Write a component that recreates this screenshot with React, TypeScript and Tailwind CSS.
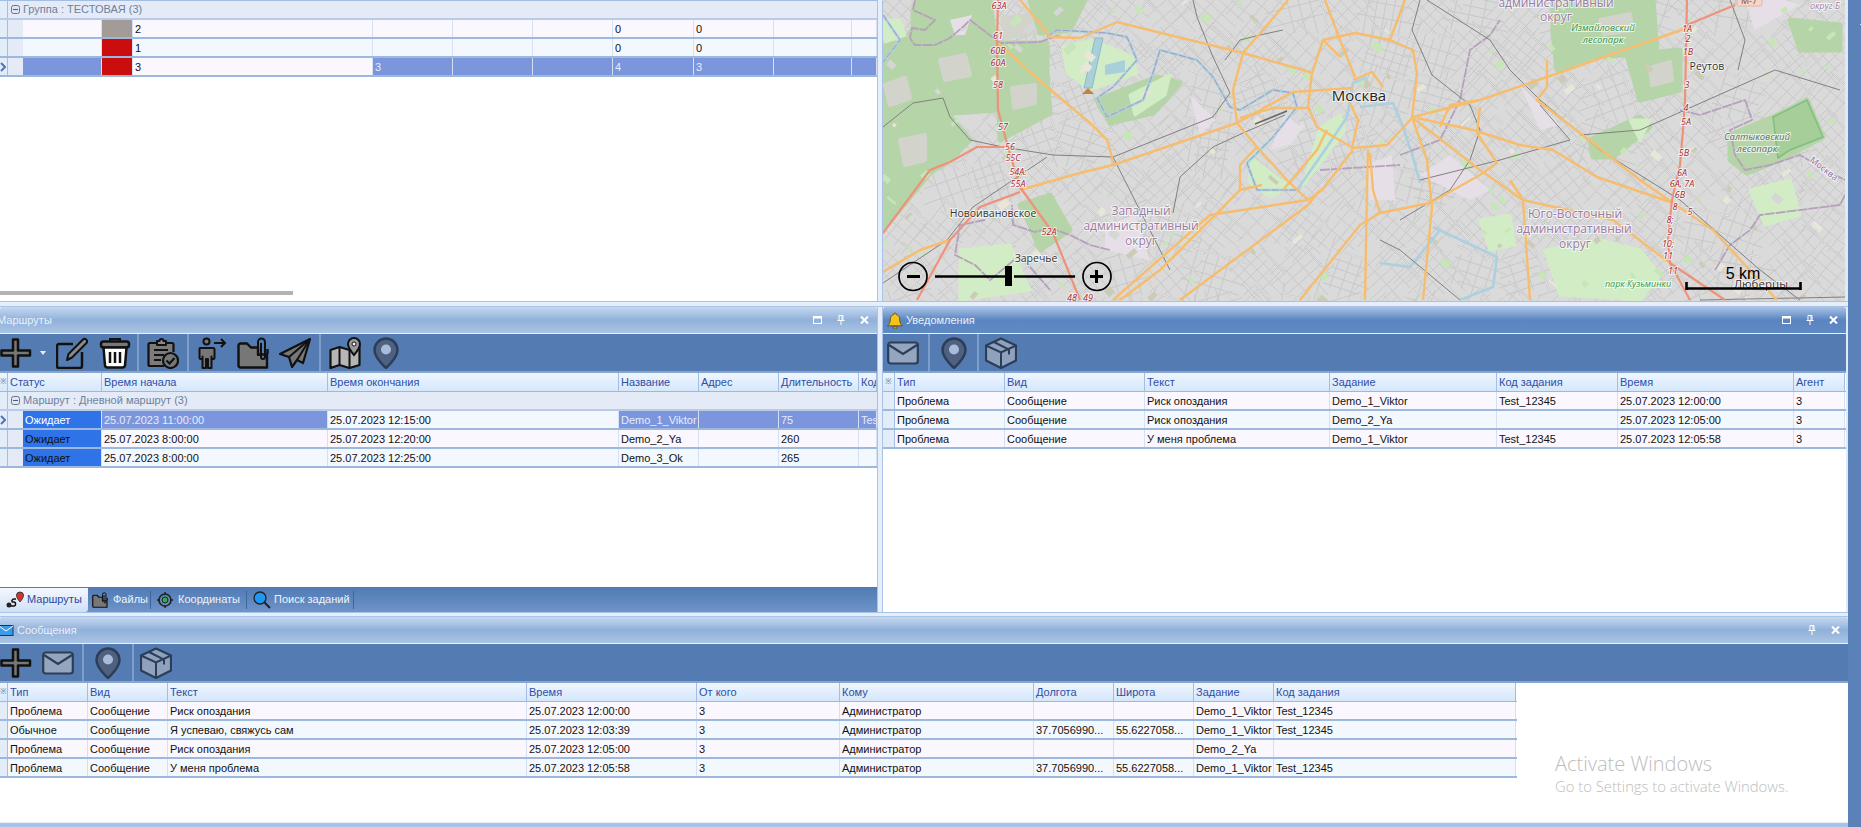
import React from "react";

const ui = "font-['Liberation_Sans',Arial,sans-serif]";

type Cell = { w: string; t?: string; c?: string };

function Marker({ kind, wide }: { kind?: "head" | "row" | "sel"; wide?: boolean }) {
  const width = wide ? "w-[12px]" : "w-[8px]";
  if (kind === "head")
    return (
      <div className={`${width} shrink-0 h-full border-r border-[#a3bde3] bg-gradient-to-b from-[#f0f6ff] to-[#d5e7fb] flex items-center justify-center text-[8px] text-[#5a78a8] overflow-hidden`}>
        ※
      </div>
    );
  return (
    <div className={`${width} shrink-0 h-full border-r border-[#a3bde3] bg-[#e3edf9] flex items-center`}>
      {kind === "sel" && (
        <svg width="6" height="10" viewBox="0 0 6 10">
          <path d="M1 1l4 4-4 4" fill="none" stroke="#4f78b4" strokeWidth="2" />
        </svg>
      )}
    </div>
  );
}

function HeaderRow({ cols, wide }: { cols: Cell[]; wide?: boolean }) {
  return (
    <div className="flex h-[19px] border-b border-[#9db8dd] shrink-0">
      <Marker kind="head" wide={wide} />
      {cols.map((c, i) => (
        <div
          key={i}
          className={`${c.w} shrink-0 h-full px-[2px] border-r border-[#a3bde3] bg-gradient-to-b from-[#f0f6ff] to-[#d5e7fb] text-[#2d4ea6] text-[11px] leading-[18px] overflow-hidden whitespace-nowrap`}
        >
          {c.t}
        </div>
      ))}
    </div>
  );
}

const oddBg = "bg-[#fbf7fe]";
const evenBg = "bg-[#f3f8ff]";
const selBg = "bg-[#7b96dd] text-[#e6ecff]";

function DataRow({
  cells,
  bg,
  indent,
  marker,
  wide,
}: {
  cells: Cell[];
  bg: string;
  indent?: boolean;
  marker?: "row" | "sel";
  wide?: boolean;
}) {
  return (
    <div className="flex h-[19px] border-b-2 border-[#9db8dd] shrink-0">
      <Marker kind={marker || "row"} wide={wide} />
      {indent && <div className="w-[15px] shrink-0 h-full bg-[#e4ebf7]" />}
      {cells.map((c, i) => (
        <div
          key={i}
          className={`${c.w} ${c.c || bg} shrink-0 h-full px-[2px] border-r border-[#d5e1f2] text-[11px] leading-[18px] overflow-hidden whitespace-nowrap ${
            c.c ? "" : "text-[#111]"
          }`}
        >
          {c.t}
        </div>
      ))}
    </div>
  );
}

function GroupRow({ text }: { text: string }) {
  return (
    <div className="flex h-[19px] border-b-2 border-[#b9cbe8] bg-[#e4ebf7] shrink-0">
      <Marker />
      <div className="flex items-center pl-[3px] gap-[3px] text-[11px] text-[#6f7f9c] whitespace-nowrap">
        <svg width="9" height="9" viewBox="0 0 9 9">
          <rect x="0.5" y="0.5" width="8" height="8" rx="2" fill="#dfe6f2" stroke="#66758f" />
          <path d="M2 4.5h5" stroke="#4f5d78" />
        </svg>
        <span>{text}</span>
      </div>
    </div>
  );
}

function TitleBar({
  active,
  icon,
  text,
  noMin,
  textClass,
}: {
  active?: boolean;
  icon?: React.ReactNode;
  text: string;
  noMin?: boolean;
  textClass?: string;
}) {
  return (
    <div
      className={`relative h-[27px] shrink-0 flex items-center gap-[3px] rounded-t-[2px] border-b border-[#e8f1fb] ${
        active
          ? "bg-gradient-to-b from-[#a9c3e6] via-[#5a85c0] to-[#5f8ac4]"
          : "bg-gradient-to-b from-[#c5d8ef] via-[#91b1da] to-[#a9c4e4]"
      }`}
    >
      {icon}
      <span className={`text-[11px] text-[#eaf1fa] whitespace-nowrap ${textClass || ""}`}>{text}</span>
      <div className="ml-auto flex items-center gap-[15px] pr-[8px] h-full">
        {!noMin && (
          <svg width="9" height="8" viewBox="0 0 9 8">
            <rect x="0.5" y="0.5" width="8" height="7" fill="none" stroke="#fff" />
            <rect x="0" y="0" width="9" height="2.5" fill="#fff" />
          </svg>
        )}
        <svg width="8" height="10" viewBox="0 0 8 10">
          <path d="M2 .5h4v5H2zM.5 5.5h7M4 5.5V10M5 1v4" fill="none" stroke="#fff" />
        </svg>
        <svg width="9" height="8" viewBox="0 0 9 8">
          <path d="M1 .5l7 7M8 .5l-7 7" stroke="#fff" strokeWidth="2" />
        </svg>
      </div>
    </div>
  );
}

const K = "#111";

function IPlus() {
  return (
    <svg width="32" height="32" viewBox="0 0 32 32">
      <path d="M13 2.500h5v11h12v5H18v11h-5v-11H1.500v-5H13z" fill="#777" stroke={K} strokeWidth="2.500" strokeLinejoin="round" />
    </svg>
  );
}
function IEdit() {
  return (
    <svg width="32" height="32" viewBox="0 0 32 32">
      <path d="M17 7H3a2 2 0 0 0-2 2v20a2 2 0 0 0 2 2h21a2 2 0 0 0 2-2V15" fill="none" stroke={K} strokeWidth="2.500" strokeLinejoin="round" />
      <path d="M11 23l1.500-6L27 2.500a2 2 0 0 1 3 0l.5.5a2 2 0 0 1 0 3L16 20.500z" fill="#8a8a8a" stroke={K} strokeWidth="2" strokeLinejoin="round" />
    </svg>
  );
}
function ITrash() {
  return (
    <svg width="32" height="32" viewBox="0 0 32 32">
      <path d="M11 4V2h10v2" fill="none" stroke={K} strokeWidth="2" />
      <rect x="2" y="4.500" width="28" height="6" rx="2.500" fill="#777" stroke={K} strokeWidth="2.500" />
      <path d="M4.500 10.500l1.500 18a2.500 2.500 0 0 0 2.500 2h15a2.500 2.500 0 0 0 2.500-2l1.500-18z" fill="#fff" stroke={K} strokeWidth="2.500" />
      <path d="M11 15v11M16 15v11M21 15v11" stroke={K} strokeWidth="2.500" />
    </svg>
  );
}
function IClip() {
  return (
    <svg width="32" height="32" viewBox="0 0 32 32">
      <path d="M3 6h22a1.500 1.500 0 0 1 1.500 1.500V22L17 29H3a1.500 1.500 0 0 1-1.500-1.500v-20A1.500 1.500 0 0 1 3 6z" fill="#7b7b7b" />
      <path d="M10 6H3a1.500 1.500 0 0 0-1.500 1.500v20A1.500 1.500 0 0 0 3 29h14M20 6h5a1.500 1.500 0 0 1 1.500 1.500V15" fill="none" stroke={K} strokeWidth="2.200" />
      <path d="M10 8V4h2.500a2 2 0 0 1 4 0H19v4z" fill="#888" stroke={K} strokeWidth="2" strokeLinejoin="round" />
      <path d="M7 13h14M7 18h10M7 23h7" stroke={K} strokeWidth="2.200" />
      <circle cx="23.500" cy="23.500" r="7.500" fill="#777" stroke={K} strokeWidth="2.200" />
      <path d="M19.500 23.500l3 3 5-5.500" fill="none" stroke={K} strokeWidth="2.200" />
    </svg>
  );
}
function IPerson() {
  return (
    <svg width="30" height="32" viewBox="0 0 30 32">
      <circle cx="9.500" cy="4.500" r="3" fill="#777" stroke={K} strokeWidth="2" />
      <path d="M3 11h13a1.500 1.500 0 0 1 1.500 1.500v8a1.500 1.500 0 0 1-3 0v-1V31h-3.500v-9h-2v9H5.500V19.500v1a1.500 1.500 0 0 1-3 0v-8A1.500 1.500 0 0 1 3 11z" fill="#777" stroke={K} strokeWidth="2" strokeLinejoin="round" />
      <path d="M17 6h11M24 2l4 4-4 4" fill="none" stroke={K} strokeWidth="2" />
    </svg>
  );
}
function IFolder({ s = 32 }: { s?: number }) {
  return (
    <svg width={s} height={s} viewBox="0 0 32 32">
      <path d="M1.500 8.500a2 2 0 0 1 2-2H10l4 4h7v7h9v13H3.500a2 2 0 0 1-2-2z" fill="#777" stroke={K} strokeWidth="2.400" strokeLinejoin="round" />
      <path d="M30.500 17V12" stroke={K} strokeWidth="2.400" />
      <path d="M21 19V5a3.500 3.500 0 0 1 7 0v15a2 2 0 0 1-4 0V6" fill="none" stroke={K} strokeWidth="2" />
    </svg>
  );
}
function IPlane() {
  return (
    <svg width="32" height="32" viewBox="0 0 32 32">
      <path d="M31 2L1 17l9 3 3 10 5-7 6 3z" fill="#777" stroke={K} strokeWidth="2.200" strokeLinejoin="round" />
      <path d="M31 2L10 20M31 2L18 23" fill="none" stroke={K} strokeWidth="2" />
    </svg>
  );
}
function IMap() {
  return (
    <svg width="32" height="32" viewBox="0 0 32 32">
      <path d="M1.500 13l9-3 10 3 10-3v18l-10 3-10-3-9 3z" fill="#b6b6b6" stroke={K} strokeWidth="2.200" strokeLinejoin="round" />
      <path d="M10.500 10v18M20.500 13v18" stroke={K} strokeWidth="2" />
      <path d="M25 1a6 6 0 0 1 6 6c0 4-6 11-6 11s-6-7-6-11a6 6 0 0 1 6-6z" fill="#999" stroke={K} strokeWidth="2" />
      <circle cx="25" cy="7" r="2" fill="#fff" stroke={K} />
    </svg>
  );
}
function IPin() {
  return (
    <svg width="26" height="32" viewBox="0 0 26 32">
      <path d="M13 1.500A11.500 11.500 0 0 1 24.500 13C24.500 21 13 31 13 31S1.500 21 1.500 13A11.500 11.500 0 0 1 13 1.500z" fill="#4e6181" stroke="#2c3d58" strokeWidth="2.400" />
      <circle cx="13" cy="12.500" r="5" fill="#a9bbdb" />
    </svg>
  );
}
function IEnvelope() {
  return (
    <svg width="32" height="32" viewBox="0 0 32 32">
      <rect x="1.200" y="5.500" width="29.600" height="21" rx="2.500" fill="#94a5bf" stroke="#2c3d58" strokeWidth="2.200" />
      <path d="M2 8l14 9 14-9" fill="none" stroke="#2c3d58" strokeWidth="2.200" />
    </svg>
  );
}
function IBox() {
  return (
    <svg width="32" height="32" viewBox="0 0 32 32">
      <path d="M16 1.500L31 8.500v15L16 31 1 23.500v-15z" fill="#8ea1bd" stroke="#2c3d58" strokeWidth="2.200" strokeLinejoin="round" />
      <path d="M1 8.500l15 7 15-7M16 15.500V31M9 5l15 7.500v5" fill="none" stroke="#2c3d58" strokeWidth="2" />
    </svg>
  );
}

function Sep() {
  return <div className="w-[2px] h-full bg-[#7f9fcb] shrink-0" />;
}

function MapView() {
  let seed = 17;
  const rnd = () => {
    seed = (seed * 16807) % 2147483647;
    return seed / 2147483647;
  };
  const minor: string[] = [];
  const major: string[] = [];
  const CELL = 44;
  for (let cx = 883; cx < 1845; cx += CELL) {
    for (let cy = -10; cy < 301; cy += CELL) {
      const a = (rnd() < 0.7 ? 0.78 : rnd() < 0.5 ? 0.25 : 1.25) + (rnd() - 0.5) * 0.2;
      const dirs = [a, a - Math.PI / 2];
      dirs.forEach((d, di) => {
        const n = 3 + Math.floor(rnd() * 3);
        for (let k = 0; k < n; k++) {
          const ox = cx + CELL / 2 + Math.cos(d + Math.PI / 2) * (k - n / 2) * (CELL / n);
          const oy = cy + CELL / 2 + Math.sin(d + Math.PI / 2) * (k - n / 2) * (CELL / n);
          const l = CELL * (0.35 + rnd() * 0.45);
          const seg = `M${(ox - Math.cos(d) * l).toFixed(1)} ${(oy - Math.sin(d) * l).toFixed(1)}L${(ox + Math.cos(d) * l).toFixed(1)} ${(oy + Math.sin(d) * l).toFixed(1)}`;
          if (k === 0 && di === 0) major.push(seg);
          else minor.push(seg);
        }
      });
    }
  }
  const greens: [number, number, number, number, number][] = [];
  for (let i = 0; i < 170; i++) greens.push([883 + rnd() * 962, rnd() * 301, 3 + rnd() * 9, 2 + rnd() * 6, rnd() < 0.5 ? 40 : -40]);

  const forests = [
    "883,43 900,43 913,30 913,10 917,0 990,0 995,43 1047,43 1047,77 997,110 953,113 943,97 913,103 883,123",
    "883,127 913,107 943,100 950,117 970,140 950,160 930,173 883,230",
    "998,77 1047,77 1050,113 1000,140",
    "1097,100 1157,77 1180,83 1153,113 1110,123",
    "1030,0 1085,0 1070,30 1040,33",
    "1553,0 1653,0 1657,53 1593,57 1557,70 1553,33",
    "1590,140 1640,117 1650,127 1613,157 1593,157",
    "1627,55 1680,50 1680,90 1640,100",
    "1730,135 1773,117 1807,100 1823,137 1780,160 1747,173 1730,160",
    "1020,205 1050,195 1070,230 1040,250 1030,225",
    "1790,20 1840,25 1840,50 1800,50",
  ];
  const clearings = [
    "940,60 965,55 970,75 945,80",
    "1002,18 1030,15 1035,32 1006,38",
    "900,140 925,135 925,160 905,165",
    "1012,88 1035,85 1035,103 1014,108",
    "885,85 905,78 910,98 890,105",
    "1600,20 1630,14 1632,30 1604,34",
    "1650,68 1670,62 1672,80 1652,85",
  ];
  const lights = [
    "1063,47 1093,40 1133,57 1137,73 1090,90 1067,73",
    "1130,95 1170,75 1165,95 1135,115",
    "960,250 1010,245 1030,290 960,300",
    "1545,250 1600,240 1640,250 1660,275 1640,300 1560,295",
    "1250,157 1290,187 1270,197 1250,183",
    "1320,128 1340,115 1345,130 1315,170 1303,185",
    "883,20 900,20 905,35 885,42",
    "1630,120 1650,120 1640,140",
    "1750,190 1790,180 1800,215 1765,225",
    "1480,220 1510,215 1515,245 1490,250",
  ];
  const pinkish = [
    "950,20 972,15 965,35 955,35",
    "1190,95 1215,120 1200,135",
    "1420,175 1450,155 1490,190 1470,200",
    "1285,115 1305,125 1290,145 1270,150",
    "1105,225 1135,215 1150,260 1105,250",
    "1520,85 1560,125 1540,130",
    "1365,165 1392,155 1395,200 1370,200",
    "1755,30 1800,5 1785,0 1745,0",
  ];
  const orange = [
    "1020,0 1037,20 1050,37 1080,38 1117,22 1157,32 1243,53 1303,70 1312,73",
    "998,43 1047,87 1090,123 1107,140 1112,157 1113,165",
    "1020,190 1080,173 1113,165 1237,123 1293,92 1353,88",
    "1288,0 1280,10 1243,53 1233,90 1237,123 1257,147 1287,180 1308,200",
    "883,272 920,250 950,240",
    "1113,300 1210,215 1308,200 1322,190 1353,150",
    "1180,300 1308,205 1320,190",
    "1120,300 1160,270 1240,190 1262,185",
    "1240,190 1240,165 1257,147",
    "1240,118 1273,108 1308,108",
    "1310,90 1308,107 1317,127 1353,148 1387,145 1412,118 1417,73 1413,50 1390,40 1355,33 1323,40 1312,73 1310,90",
    "1353,80 1372,72 1383,87",
    "1350,103 1358,120 1352,148",
    "1340,40 1355,77",
    "1323,40 1340,57",
    "1413,117 1480,100 1547,77 1687,28",
    "1417,118 1473,130 1520,145 1553,150 1597,177 1673,203 1713,230 1777,300",
    "1413,118 1480,170 1523,200 1613,220 1670,263",
    "1440,127 1450,105 1480,100",
    "1547,60 1547,87 1537,100 1580,133 1640,180 1673,203",
    "1480,107 1477,133 1497,163 1480,175 1430,203 1380,213",
    "1423,300 1432,207 1427,160 1413,120",
    "1530,300 1523,200 1510,180",
    "1368,150 1367,190 1365,300",
    "1370,153 1373,190 1380,213",
    "1283,190 1317,150 1327,130",
    "1300,300 1340,250 1360,225 1380,213",
    "1340,40 1325,0",
    "1390,40 1405,0",
  ];
  const motorway = [
    "1687,0 1685,100 1683,130 1680,165 1672,200 1668,240 1670,263 1690,300",
    "1687,25 1735,5",
    "998,0 997,43 998,110 1008,147 1020,187 1053,233 1080,300",
    "1008,147 977,147 950,162 930,170 883,233",
    "1020,192 980,207 950,240 917,300",
    "1670,263 1725,300",
  ];
  const rails = [
    "883,127 913,103 943,98 950,117 970,140 1003,147 1053,155 1113,157 1213,117 1230,93 1213,57 1197,17 1193,0",
    "973,207 1047,157",
    "883,283 947,240 973,207",
    "1173,213 1180,177 1213,147 1243,133 1285,115",
    "1113,157 1170,270",
    "1283,30 1260,35 1240,40 1225,60",
    "1420,0 1412,30 1432,75 1470,105 1480,130 1470,160 1450,190 1400,220",
    "1427,0 1490,40 1510,70 1540,100 1600,150 1680,200 1760,270 1800,300",
    "1580,135 1640,130 1775,70 1840,90",
    "1540,105 1570,140 1500,160 1420,180",
    "1380,240 1400,250 1460,300",
    "1730,0 1745,40 1738,70",
    "1700,300 1845,297",
  ];
  const boundary = [
    "915,0 913,10 935,20 925,30 912,28 910,38 915,45 935,45 950,38 965,25 970,20 1000,43 1040,42 1060,35",
    "1110,250 1090,245 1070,235 1050,228 1035,232 1013,225 1012,205",
    "985,220 960,225 955,255 975,265 990,280 1020,255 1050,290",
    "1680,110 1700,115 1745,100 1752,120 1730,130 1735,155 1745,170 1770,165 1800,155 1825,170 1845,180",
    "1845,195 1840,205 1760,215 1750,230 1730,245 1715,270",
    "1400,155 1440,140 1460,100 1470,50 1490,35 1500,20",
    "1320,170 1400,165",
  ];
  const river = [
    "883,15 900,40 883,62",
    "1047,37 1057,30 1107,33 1127,37 1137,60 1113,87 1097,98 1107,117 1143,100 1153,73 1160,50 1197,60 1213,77 1230,107 1240,110 1273,90 1293,93 1297,107 1273,137 1247,163 1257,190 1297,190",
    "1297,190 1327,147 1347,117 1353,83 1367,77",
    "1360,107 1393,103 1403,127 1413,157 1420,183",
    "1433,227 1497,257 1493,287 1460,300",
    "1380,263 1410,267 1440,230",
  ];

  const lb = "[paint-order:stroke] stroke-white/70 [stroke-width:2px]";
  const exits: [string, number, number][] = [
    ["63A", 999, 9], ["61", 998, 39], ["60B", 998, 54], ["60A", 998, 66], ["58", 998, 88], ["57", 1003, 130],
    ["56", 1010, 150], ["55C", 1013, 161], ["54A:", 1018, 175], ["55A", 1018, 187], ["52A", 1049, 235], ["48", 1072, 301], ["49", 1088, 301],
    ["1A", 1687, 32], ["2", 1688, 42], ["1B", 1688, 55], ["3", 1687, 88], ["4", 1686, 111], ["5A", 1686, 125], ["5B", 1684, 156],
    ["6A", 1682, 176], ["6A, 7A", 1682, 187], ["6B", 1680, 198], ["8", 1675, 210], ["5", 1690, 215], ["8;", 1670, 223], ["9", 1670, 235], ["10;", 1668, 247], ["11", 1668, 259], ["11", 1673, 274],
  ];
  const district: [string, number, number][] = [
    ["Западный", 1141, 215], ["административный", 1141, 230], ["округ", 1141, 245],
    ["Юго-Восточный", 1575, 218], ["административный", 1574, 233], ["округ", 1575, 248],
    ["административный", 1556, 7], ["округ", 1556, 21],
  ];

  return (
    <svg className="block w-full h-full" viewBox="883 0 962 301" fontFamily="'Open Sans','Noto Sans',sans-serif">
      <rect x="883" y="0" width="962" height="301" fill="#dadada" />
      <path d={major.join("")} stroke="#bababa" strokeWidth="1.600" fill="none" />
      <path d={minor.join("")} stroke="#c8c8c8" strokeWidth="1" fill="none" />
      <path d={major.join("")} stroke="#f0f0f0" strokeWidth="0.800" fill="none" />
      {forests.map((p, i) => <polygon key={i} points={p} fill="#b5d4a8" stroke="#b5d4a8" strokeWidth="5" strokeLinejoin="round" />)}
      {clearings.map((p, i) => <polygon key={i} points={p} fill="#d2d4cc" stroke="#d2d4cc" strokeWidth="4" strokeLinejoin="round" />)}
      {lights.map((p, i) => <polygon key={i} points={p} fill="#d2ecc6" stroke="#d2ecc6" strokeWidth="3" strokeLinejoin="round" />)}
      {pinkish.map((p, i) => <polygon key={i} points={p} fill="#e7dfe8" />)}
      <polygon points="1095,38 1103,38 1092,88 1084,88" fill="#a9d0d8" stroke="#8fb9c9" />
      <polygon points="1105,65 1125,60 1125,72 1105,75" fill="#a9d0d8" />
      {greens.map((s, i) => (
        <rect key={i} x={s[0]} y={s[1]} width={s[2]} height={s[3]} fill={i % 5 === 0 ? "#e8e6d8" : i % 5 === 1 ? "#cbcbb8" : i % 5 === 2 ? "#d7d6d6" : "#c6e6b8"} transform={`rotate(${s[4]} ${s[0]} ${s[1]})`} />
      ))}
      {river.map((p, i) => <polyline key={i} points={p} fill="none" stroke="#add0df" strokeWidth="2.600" strokeLinejoin="round" />)}
      {river.slice(0, 2).map((p, i) => <polyline key={i} points={p} fill="none" stroke="#9a9dbf" strokeWidth="1" strokeDasharray="7 2" strokeLinejoin="round" />)}
      {boundary.map((p, i) => <polyline key={i} points={p} fill="none" stroke="#b6a0bb" strokeWidth="1.800" strokeLinejoin="round" strokeDasharray="10 1" />)}
      {rails.map((p, i) => <polyline key={i} points={p} fill="none" stroke="#808080" strokeWidth="1" strokeLinejoin="round" />)}
      {orange.map((p, i) => <polyline key={i} points={p} fill="none" stroke="#f7bd6e" strokeWidth="2.400" strokeLinejoin="round" />)}
      {motorway.map((p, i) => <polyline key={i} points={p} fill="none" stroke="#ee927a" strokeWidth="2.200" strokeLinejoin="round" />)}
      <polygon points="1082,94 1088,88 1094,94" fill="#c9803f" />
      <path d="M1255 124l32-13" stroke="#666" strokeWidth="1.500" />
      <polygon points="1773,117 1807,100 1823,137 1790,150 1778,158" fill="#a5ce98" stroke="#80bd80" strokeWidth="1.500" />

      {exits.map((e, i) => (
        <text key={i} x={e[1]} y={e[2]} textAnchor="middle" fontSize="9" fontStyle="italic" fill="#a31f35" className={lb}>{e[0]}</text>
      ))}
      {district.map((e, i) => (
        <text key={i} x={e[1]} y={e[2]} textAnchor="middle" fontSize="12" fill="#9a7aa2" className={lb}>{e[0]}</text>
      ))}
      <text x="1359" y="101" textAnchor="middle" fontSize="15" fill="#222" className={lb}>Москва</text>
      <text x="993" y="217" textAnchor="middle" fontSize="10.500" fill="#333" className={lb}>Новоивановское</text>
      <text x="1036" y="262" textAnchor="middle" fontSize="10.500" fill="#333" className={lb}>Заречье</text>
      <text x="1707" y="70" textAnchor="middle" fontSize="10.500" fill="#333" className={lb}>Реутов</text>
      <text x="1603" y="31" textAnchor="middle" fontSize="9.500" fontStyle="italic" fill="#2f8f3f" className={lb}>Измайловский</text>
      <text x="1603" y="43" textAnchor="middle" fontSize="9.500" fontStyle="italic" fill="#2f8f3f" className={lb}>лесопарк</text>
      <text x="1757" y="140" textAnchor="middle" fontSize="9.500" fontStyle="italic" fill="#4d7056" className={lb}>Салтыковский</text>
      <text x="1757" y="152" textAnchor="middle" fontSize="9.500" fontStyle="italic" fill="#4d7056" className={lb}>лесопарк</text>
      <text x="1638" y="287" textAnchor="middle" fontSize="9" fontStyle="italic" fill="#2f9a3f" className={lb}>парк Кузьминки</text>
      <text x="1822" y="171" textAnchor="middle" fontSize="9" fill="#8f6f9f" transform="rotate(38 1822 171)" className={lb}>Москва</text>
      <text x="1825" y="9" textAnchor="middle" fontSize="9" fontStyle="italic" fill="#a07fa8" className={lb}>округ Б</text>
      <rect x="1737" y="-6" width="25" height="12" rx="2" fill="#f7d6c6" stroke="#e0b5a5" />
      <text x="1749" y="4" textAnchor="middle" fontSize="9" fill="#8a4a3a">M-7</text>
      <text x="1761" y="288" textAnchor="middle" fontSize="11.500" fill="#333" className={lb}>Люберцы</text>

      <g fill="none" stroke="#000">
        <circle cx="913" cy="276.500" r="14" strokeWidth="1.700" />
        <path d="M907 276.500h13" strokeWidth="3" />
        <path d="M935 276.500h70M1014 276.500h61" strokeWidth="2.500" />
        <rect x="1005" y="266" width="7" height="20" fill="#000" strokeWidth="0" />
        <circle cx="1097" cy="276.500" r="14" strokeWidth="1.700" />
        <path d="M1090 276.500h13M1096.500 270v13" strokeWidth="3" />
        <path d="M1686.500 282v8M1686 288.500h115M1800.500 282v8" strokeWidth="2.600" />
      </g>
      <text x="1743" y="279" textAnchor="middle" fontSize="16" fontFamily="'Liberation Sans',sans-serif" fill="#000">5 km</text>
    </svg>
  );
}

function TopPanel() {
  const widths = ["w-[79px]", "w-[31px]", "w-[240px]", "w-[80px]", "w-[80px]", "w-[80px]", "w-[81px]", "w-[80px]", "w-[78px]", "w-[25px]"];
  const make = (a: string, swatch: string, v: string[], rowBg: string, sel?: boolean): Cell[] =>
    widths.map((cw, i) => {
      if (i === 1) return { w: cw, c: swatch };
      if (i === 2) return { w: cw, t: a, c: `${rowBg} text-[#111]` };
      const t = i === 3 ? v[0] : i === 6 ? v[1] : i === 7 ? v[2] : "";
      return { w: cw, t, c: sel ? selBg : undefined };
    });
  return (
    <div className="w-[877px] shrink-0 h-full bg-white overflow-hidden flex flex-col relative">
      <div className="h-[1px] shrink-0 bg-[#a3bde3]" />
      <GroupRow text="Группа : ТЕСТОВАЯ (3)" />
      <DataRow indent bg={oddBg} cells={make("2", "bg-[#a39b98]", ["", "0", "0"], oddBg)} />
      <DataRow indent bg={evenBg} cells={make("1", "bg-[#cc0d0d]", ["", "0", "0"], evenBg)} />
      <DataRow indent marker="sel" bg={oddBg} cells={make("3", "bg-[#cc0d0d]", ["3", "4", "3"], oddBg, true)} />
      <div className="h-[214px] shrink-0" />
      <div className="w-[293px] h-[4px] bg-[#b3b3b3] shrink-0" />
    </div>
  );
}

function RoutesPanel() {
  const cw = ["w-[79px]", "w-[226px]", "w-[291px]", "w-[80px]", "w-[80px]", "w-[80px]", "w-[18px]"];
  const row = (t1: string, t2: string, n: string, d: string, sel?: boolean): Cell[] => [
    { w: cw[0], t: "Ожидает", c: sel ? "bg-[#2e74e8] text-white" : "bg-[#2e74e8] text-[#111]" },
    { w: cw[1], t: t1, c: sel ? selBg : undefined },
    { w: cw[2], t: t2, c: sel ? "bg-[#f3f8ff] text-[#111]" : undefined },
    { w: cw[3], t: n, c: sel ? selBg : undefined },
    { w: cw[4], t: "", c: sel ? selBg : undefined },
    { w: cw[5], t: d, c: sel ? selBg : undefined },
    { w: cw[6], t: sel ? "Test" : "", c: sel ? selBg : undefined },
  ];
  return (
    <div className="w-[877px] shrink-0 h-full flex flex-col bg-white overflow-hidden">
      <TitleBar text="Маршруты" textClass="-ml-[3px]" />
      <div className="h-[39px] shrink-0 bg-[#547cb2] flex items-center border-b-2 border-[#86a5cf]">
        <div className="flex items-center h-full w-[137px] shrink-0">
          <IPlus />
          <svg className="ml-[8px] mr-[10px]" width="6" height="4" viewBox="0 0 6 4"><path d="M0 0h6L3 4z" fill="#e8eef8" /></svg>
          <IEdit />
          <div className="w-[11px] shrink-0" />
          <ITrash />
        </div>
        <Sep />
        <div className="flex items-center justify-center h-full w-[48px] shrink-0"><IClip /></div>
        <Sep />
        <div className="flex items-center h-full w-[130px] shrink-0 pl-[8px] gap-[10px]">
          <IPerson />
          <IFolder />
          <IPlane />
        </div>
        <Sep />
        <div className="flex items-center h-full pl-[8px] gap-[12px]">
          <IMap />
          <IPin />
        </div>
      </div>
      <HeaderRow cols={[
        { w: "w-[94px]", t: "Статус" }, { w: cw[1], t: "Время начала" }, { w: cw[2], t: "Время окончания" }, { w: cw[3], t: "Название" },
        { w: cw[4], t: "Адрес" }, { w: cw[5], t: "Длительность" }, { w: cw[6], t: "Код" },
      ]} />
      <GroupRow text="Маршрут : Дневной маршрут (3)" />
      <DataRow indent marker="sel" bg={evenBg} cells={row("25.07.2023 11:00:00", "25.07.2023 12:15:00", "Demo_1_Viktor", "75", true)} />
      <DataRow indent bg={oddBg} cells={row("25.07.2023 8:00:00", "25.07.2023 12:20:00", "Demo_2_Ya", "260")} />
      <DataRow indent bg={evenBg} cells={row("25.07.2023 8:00:00", "25.07.2023 12:25:00", "Demo_3_Ok", "265")} />
      <div className="flex-1" />
      <div className="h-[25px] shrink-0 bg-gradient-to-b from-[#4f7ab4] to-[#6f94c8] flex items-center text-[11px] text-[#eef4fc] whitespace-nowrap">
        <div className="w-[88px] h-[24px] shrink-0 rounded-br-[3px] bg-gradient-to-b from-[#f4f8fe] to-[#cfe0f6] text-[#2a4aa0] flex items-center pl-[6px] gap-[3px]">
          <svg width="18" height="18" viewBox="0 0 18 18">
            <path d="M3 15h5c2 0 2-4 0-4H7c-2 0-1-3 1-3h2" fill="none" stroke="#111" strokeWidth="1.500" />
            <circle cx="3" cy="14" r="2.500" fill="#222" />
            <path d="M14 1a3.500 3.500 0 0 1 3.500 3.500C17.500 7 14 11 14 11s-3.500-4-3.500-6.500A3.500 3.500 0 0 1 14 1z" fill="#d2332f" stroke="#333" />
          </svg>
          <span>Маршруты</span>
        </div>
        <div className="flex items-center w-[63px] shrink-0 pl-[4px] gap-[5px] h-[18px] border-r border-[#3f659d]">
          <IFolder s={16} />
          <span>Файлы</span>
        </div>
        <div className="flex items-center w-[96px] shrink-0 pl-[6px] gap-[5px] h-[18px] border-r border-[#3f659d]">
          <svg width="16" height="16" viewBox="0 0 16 16">
            <circle cx="8" cy="8" r="6" fill="none" stroke="#222" strokeWidth="1.600" />
            <circle cx="8" cy="8" r="3" fill="#39a845" stroke="#222" />
            <path d="M8 0v3M8 13v3M0 8h3M13 8h3" stroke="#222" strokeWidth="1.400" />
          </svg>
          <span>Координаты</span>
        </div>
        <div className="flex items-center w-[107px] shrink-0 pl-[6px] gap-[3px] h-[18px] border-r border-[#3f659d]">
          <svg width="18" height="18" viewBox="0 0 18 18">
            <circle cx="7" cy="7" r="6" fill="#2196f3" stroke="#222" strokeWidth="1.300" />
            <path d="M11.500 11.500L17 17" stroke="#222" strokeWidth="2" />
          </svg>
          <span>Поиск заданий</span>
        </div>
      </div>
    </div>
  );
}

function NoticePanel() {
  const cw = ["w-[110px]", "w-[140px]", "w-[185px]", "w-[167px]", "w-[121px]", "w-[176px]", "w-[51px]"];
  const row = (c: string, z: string, k: string, t: string): Cell[] => [
    { w: cw[0], t: "Проблема" }, { w: cw[1], t: "Сообщение" }, { w: cw[2], t: c }, { w: cw[3], t: z }, { w: cw[4], t: k }, { w: cw[5], t: t }, { w: cw[6], t: "3" },
  ];
  return (
    <div className="flex-1 h-[305px] min-w-0 flex flex-col bg-white overflow-hidden">
      <TitleBar active text="Уведомления" icon={
        <svg className="ml-[4px]" width="16" height="17" viewBox="0 0 15 16">
          <path d="M7.500 1a1 1 0 0 1 1 1.200C11 3 12 5 12 7.500c0 3 1 4 2.500 5.500H.5C2 11.500 3 10.500 3 7.500 3 5 4 3 6.500 2.200a1 1 0 0 1 1-1.200z" fill="#f7c21a" stroke="#5a4a10" strokeWidth="0.800" />
          <path d="M5.500 14a2 2 0 0 0 4 0z" fill="#f7c21a" stroke="#5a4a10" strokeWidth="0.800" />
        </svg>
      } />
      <div className="h-[39px] shrink-0 bg-[#547cb2] flex items-center border-b-2 border-[#86a5cf]">
        <div className="w-[45px] h-full shrink-0 flex items-center pl-[4px]"><IEnvelope /></div>
        <Sep />
        <div className="w-[47px] h-full shrink-0 flex items-center justify-center"><IPin /></div>
        <Sep />
        <div className="h-full flex items-center pl-[6px]"><IBox /></div>
      </div>
      <div className="flex flex-col">
        <HeaderRow wide cols={[
          { w: cw[0], t: "Тип" }, { w: cw[1], t: "Вид" }, { w: cw[2], t: "Текст" }, { w: cw[3], t: "Задание" }, { w: cw[4], t: "Код задания" }, { w: cw[5], t: "Время" }, { w: cw[6], t: "Агент" },
        ]} />
        <DataRow wide bg={oddBg} cells={row("Риск опоздания", "Demo_1_Viktor", "Test_12345", "25.07.2023 12:00:00")} />
        <DataRow wide bg={evenBg} cells={row("Риск опоздания", "Demo_2_Ya", "", "25.07.2023 12:05:00")} />
        <DataRow wide bg={oddBg} cells={row("У меня проблема", "Demo_1_Viktor", "Test_12345", "25.07.2023 12:05:58")} />
      </div>
    </div>
  );
}

function MessagesPanel() {
  const cw = ["w-[80px]", "w-[80px]", "w-[359px]", "w-[170px]", "w-[143px]", "w-[194px]", "w-[80px]", "w-[80px]", "w-[80px]", "w-[242px]"];
  const row = (a: string, c: string, t: string, lo: string, la: string, z: string, k: string): Cell[] => [
    { w: cw[0], t: a }, { w: cw[1], t: "Сообщение" }, { w: cw[2], t: c }, { w: cw[3], t }, { w: cw[4], t: "3" }, { w: cw[5], t: "Администратор" },
    { w: cw[6], t: lo }, { w: cw[7], t: la }, { w: cw[8], t: z }, { w: cw[9], t: k },
  ];
  return (
    <div className="flex-1 min-h-0 flex flex-col bg-white overflow-hidden">
      <TitleBar noMin text="Сообщения" icon={
        <svg className="-ml-[1px]" width="15" height="11" viewBox="0 0 15 11">
          <rect x="0" y="0.500" width="14" height="10" fill="#3a9be8" stroke="#16365f" />
          <path d="M0 1l7 5 7-5" fill="none" stroke="#fff" />
        </svg>
      } />
      <div className="h-[39px] shrink-0 bg-[#547cb2] flex items-center border-b-2 border-[#86a5cf]">
        <div className="w-[82px] h-full shrink-0 flex items-center gap-[10px]"><IPlus /><IEnvelope /></div>
        <Sep />
        <div className="w-[48px] h-full shrink-0 flex items-center justify-center"><IPin /></div>
        <Sep />
        <div className="h-full flex items-center pl-[6px]"><IBox /></div>
      </div>
      <div className="flex flex-col w-[1517px]">
        <HeaderRow cols={[
          { w: cw[0], t: "Тип" }, { w: cw[1], t: "Вид" }, { w: cw[2], t: "Текст" }, { w: cw[3], t: "Время" }, { w: cw[4], t: "От кого" }, { w: cw[5], t: "Кому" },
          { w: cw[6], t: "Долгота" }, { w: cw[7], t: "Широта" }, { w: cw[8], t: "Задание" }, { w: cw[9], t: "Код задания" },
        ]} />
        <DataRow bg={oddBg} cells={row("Проблема", "Риск опоздания", "25.07.2023 12:00:00", "", "", "Demo_1_Viktor", "Test_12345")} />
        <DataRow bg={evenBg} cells={row("Обычное", "Я успеваю, свяжусь сам", "25.07.2023 12:03:39", "37.7056990...", "55.6227058...", "Demo_1_Viktor", "Test_12345")} />
        <DataRow bg={oddBg} cells={row("Проблема", "Риск опоздания", "25.07.2023 12:05:00", "", "", "Demo_2_Ya", "")} />
        <DataRow bg={evenBg} cells={row("Проблема", "У меня проблема", "25.07.2023 12:05:58", "37.7056990...", "55.6227058...", "Demo_1_Viktor", "Test_12345")} />
      </div>
    </div>
  );
}

const vSplit = "w-[6px] shrink-0 bg-[#e6eff9] border-x border-[#a9c3e6]";

export default function App() {
  return (
    <div className={`${ui} relative w-[1861px] h-[827px] overflow-hidden flex bg-[#5a82b9]`}>
      <div className="w-[1848px] h-full shrink-0 flex flex-col">
        <div className="h-[301px] shrink-0 flex">
          <TopPanel />
          <div className={vSplit} />
          <div className="flex-1 min-w-0 h-full pr-[3px] bg-[#dfeaf7]">
            <MapView />
          </div>
        </div>
        <div className="h-[6px] shrink-0 bg-[#e6eff9] border-y border-[#a9c3e6]" />
        <div className="h-[305px] shrink-0 flex">
          <RoutesPanel />
          <div className={vSplit} />
          <NoticePanel />
          <div className="w-[2px] h-full shrink-0 bg-[#dfeaf7]" />
        </div>
        <div className="h-[5px] shrink-0 bg-[#e6eff9] border-y border-[#a9c3e6]" />
        <div className="h-[205px] shrink-0 flex flex-col">
          <MessagesPanel />
        </div>
        <div className="flex-1 bg-[#a9c3e6] border-t border-[#e6eff9]" />
      </div>
      <div className="absolute left-[1857px] top-[8px] text-[11px] text-white [writing-mode:vertical-rl] whitespace-nowrap pointer-events-none">
        ющие
      </div>
      <div className="absolute left-[1555px] top-[752px] pointer-events-none font-['Open_Sans',sans-serif] text-[#bdbdbd]">
        <div className="text-[20px] leading-[24px] font-light whitespace-nowrap">Activate Windows</div>
        <div className="text-[14.800px] leading-[20px] font-light whitespace-nowrap">Go to Settings to activate Windows.</div>
      </div>
    </div>
  );
}
